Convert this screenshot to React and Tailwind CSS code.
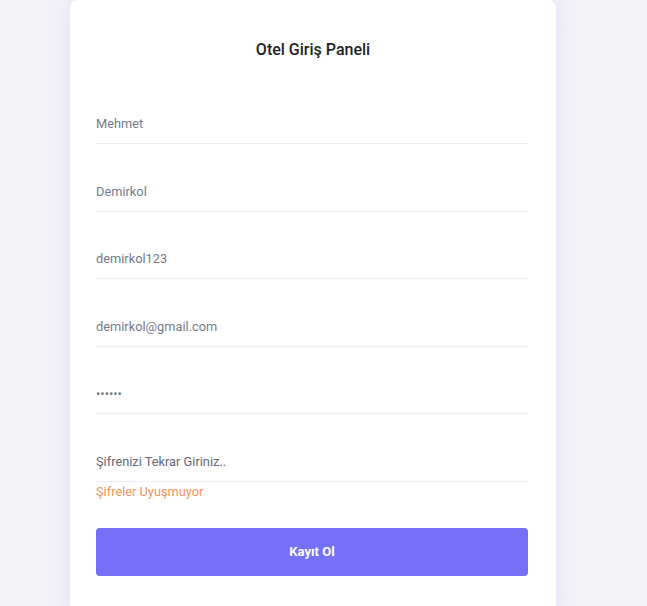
import React, { useState } from 'react';

const fields = [
    { type: 'text', value: 'Mehmet' },
    { type: 'text', value: 'Demirkol' },
    { type: 'text', value: 'demirkol123' },
    { type: 'email', value: 'demirkol@gmail.com' },
    { type: 'password', value: '123456' },
];

export default function App() {
    const [values, setValues] = useState(fields.map(f => f.value));
    const [repeat, setRepeat] = useState('');

    return (
        <div className="min-h-[606px] w-full bg-[#f3f2f9] flex justify-start pl-[70px] font-['Roboto',sans-serif]">
            <div className="w-[486px] min-h-[620px] bg-white rounded-t-lg shadow-[0_0_22px_rgba(115,100,240,0.13)] pl-[26px] pt-[40px]">
                <div className="w-[432px]">
                    <h1 className="text-center text-[16px] font-medium text-[#1e1e24] leading-[20px] pl-[2px]">
                        Otel Giriş Paneli
                    </h1>

                    <form className="mt-[44px] flex flex-col gap-[27.6px]" onSubmit={e => e.preventDefault()}>
                        {fields.map((f, i) => (
                            <input
                                key={i}
                                type={f.type}
                                value={values[i]}
                                onChange={e => setValues(values.map((v, j) => (j === i ? e.target.value : v)))}
                                className="h-10 w-full border-b border-[#eeeef2] text-[12.8px] text-[#737b8c] outline-none bg-transparent"
                            />
                        ))}
                        <div className="flex flex-col">
                            <input
                                type="password"
                                autoFocus
                                value={repeat}
                                onChange={e => setRepeat(e.target.value)}
                                placeholder="Şifrenizi Tekrar Giriniz.."
                                className="h-10 w-full border-b border-[#eeeef2] text-[12.8px] text-[#737b8c] placeholder:text-[#626876] outline-none bg-transparent caret-[#5f6573]"
                            />
                            <span className="text-[12.8px] leading-[18px] text-[#f5935c] mt-[1px]">Şifreler Uyuşmuyor</span>
                        </div>
                    </form>

                    <button className="mt-[27px] w-full h-12 rounded bg-[#7570f8] text-white text-[13px] font-bold">
                        Kayıt Ol
                    </button>
                </div>
            </div>
        </div>
    );
}
